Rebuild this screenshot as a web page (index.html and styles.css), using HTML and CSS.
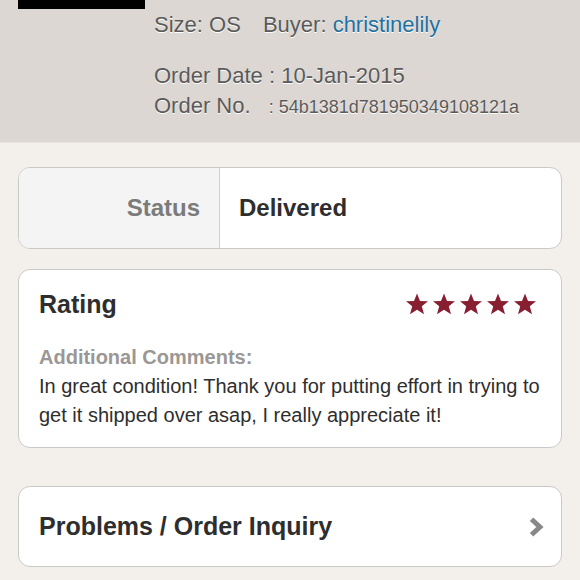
FILE: index.html
```html
<!DOCTYPE html>
<html lang="en">
<head>
    <meta charset="UTF-8">
    <meta name="viewport" content="width=device-width, initial-scale=1.0">
    <title>Order Details</title>
    <link rel="stylesheet" href="styles.css">
</head>
<body>

<div id="order-header">
    <div class="thumb"></div>
    <div class="order-info">
        <p class="meta">Size: OS <span class="buyer">Buyer: <a href="#">christinelily</a></span></p>
        <p class="date">Order Date : 10-Jan-2015</p>
        <p class="number">Order No. <span class="order-id">: 54b1381d781950349108121a</span></p>
    </div>
</div>

<div id="content">
    <div class="card status-card">
        <div class="status-label">Status</div>
        <div class="status-value">Delivered</div>
    </div>

    <div class="card rating-card">
        <div class="rating-head">
            <h2>Rating</h2>
            <div class="stars">
                <svg viewBox="0 0 24 24"><polygon points="12,1.5 15,9 23,9.3 16.8,14.3 19,22.3 12,17.8 5,22.3 7.2,14.3 1,9.3 9,9"/></svg>
                <svg viewBox="0 0 24 24"><polygon points="12,1.5 15,9 23,9.3 16.8,14.3 19,22.3 12,17.8 5,22.3 7.2,14.3 1,9.3 9,9"/></svg>
                <svg viewBox="0 0 24 24"><polygon points="12,1.5 15,9 23,9.3 16.8,14.3 19,22.3 12,17.8 5,22.3 7.2,14.3 1,9.3 9,9"/></svg>
                <svg viewBox="0 0 24 24"><polygon points="12,1.5 15,9 23,9.3 16.8,14.3 19,22.3 12,17.8 5,22.3 7.2,14.3 1,9.3 9,9"/></svg>
                <svg viewBox="0 0 24 24"><polygon points="12,1.5 15,9 23,9.3 16.8,14.3 19,22.3 12,17.8 5,22.3 7.2,14.3 1,9.3 9,9"/></svg>
            </div>
        </div>
        <p class="comments-label">Additional Comments:</p>
        <p class="comments">In great condition! Thank you for putting effort in trying to get it shipped over asap, I really appreciate it!</p>
    </div>

    <a href="#" class="card inquiry-card">
        <span>Problems / Order Inquiry</span>
        <svg class="chevron" viewBox="0 0 18 18"><polyline points="5,2 12.5,9 5,16"/></svg>
    </a>
</div>

</body>
</html>
```

FILE: styles.css
```css
body {
    font-family: "Liberation Sans", Arial, sans-serif;
    margin: 0;
    background-color: #f3f0eb;
    color: #333;
}
p {
    margin: 0;
}
#order-header {
    display: flex;
    gap: 9px;
    height: 143px;
    padding-left: 18px;
    background-color: #dcd7d2;
    border-bottom: 1px solid #e8e4df;
    box-sizing: border-box;
}
.thumb {
    width: 127px;
    height: 9px;
    background-color: #000;
}
.order-info {
    padding-top: 12px;
    color: #5a5a5a;
    font-size: 22px;
    text-shadow: 0 1px 0 #fff;
}
.order-info p {
    line-height: 26px;
}
.buyer {
    margin-left: 16px;
}
.buyer a {
    color: #23709f;
    text-decoration: none;
}
.date {
    margin-top: 25px;
}
.number {
    margin-top: 4px;
}
.order-id {
    margin-left: 12px;
    font-size: 18px;
}
#content {
    display: flex;
    flex-direction: column;
    padding: 24px 18px 0 18px;
}
.card {
    background-color: #fff;
    border: 1px solid #c9c9c7;
    border-radius: 12px;
}
.status-card {
    display: flex;
    height: 82px;
    box-sizing: border-box;
    overflow: hidden;
    font-size: 24px;
    font-weight: bold;
}
.status-label {
    width: 201px;
    box-sizing: border-box;
    padding-right: 19px;
    display: flex;
    align-items: center;
    justify-content: flex-end;
    background-color: #f4f4f4;
    border-right: 1px solid #cfcfcf;
    color: #7b7b7b;
}
.status-value {
    display: flex;
    align-items: center;
    padding-left: 19px;
    color: #2e2e2e;
}
.rating-card {
    margin-top: 20px;
    padding: 19px 18px 17px 20px;
}
.rating-head {
    display: flex;
    justify-content: space-between;
    align-items: center;
}
.rating-head h2 {
    margin: 0;
    font-size: 25px;
    line-height: 30px;
    color: #2e2e2e;
}
.stars {
    display: flex;
    gap: 3px;
    margin-right: 6px;
}
.stars svg {
    width: 24px;
    height: 24px;
    fill: #871f31;
}
.comments-label {
    margin-top: 24px;
    font-size: 20px;
    line-height: 29px;
    font-weight: bold;
    color: #9a9795;
}
.comments {
    font-size: 20px;
    line-height: 29px;
    color: #2e2e2e;
}
.inquiry-card {
    margin-top: 38px;
    height: 81px;
    box-sizing: border-box;
    display: flex;
    align-items: center;
    justify-content: space-between;
    padding: 0 15px 0 20px;
    text-decoration: none;
    font-size: 25px;
    font-weight: bold;
    color: #2e2e2e;
}
.chevron {
    width: 20px;
    height: 20px;
    fill: none;
    stroke: #888;
    stroke-width: 4.5;
}
```
